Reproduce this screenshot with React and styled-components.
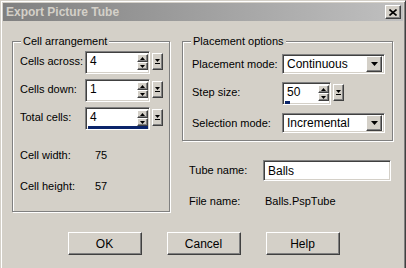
import React from "react";
import styled, { createGlobalStyle, css } from "styled-components";

const GlobalStyle = createGlobalStyle`
  html, body {
    margin: 0;
    padding: 0;
    overflow: hidden;
    background: #d4d0c8;
  }
  body {
    font-family: "Liberation Sans", Arial, sans-serif;
    font-size: 11px;
    color: #000;
  }
`;

const sunken = css`
  box-sizing: border-box;
  border: 1px solid;
  border-color: #808080 #fff #fff #808080;
  box-shadow: inset 1px 1px 0 #404040, inset -1px -1px 0 #d4d0c8;
  background: #fff;
`;

const raised = css`
  box-sizing: border-box;
  border: 1px solid;
  border-color: #fff #404040 #404040 #fff;
  box-shadow: inset -1px -1px 0 #808080, inset 1px 1px 0 #d4d0c8;
  background: #d4d0c8;
`;

const Window = styled.div`
  box-sizing: border-box;
  width: 406px;
  height: 272px;
  background: #d4d0c8;
  border: 1px solid;
  border-color: #d4d0c8 #404040 #404040 #d4d0c8;
  box-shadow: inset 1px 1px 0 #fff, inset -1px -1px 0 #808080;
  padding: 2px;
  display: flex;
  flex-direction: column;
`;

const TitleBar = styled.div`
  height: 18px;
  display: flex;
  align-items: center;
  justify-content: space-between;
  padding: 0 2px 0 3px;
  background: linear-gradient(to right, #808080, #c0c0c0);
`;

const Title = styled.span`
  font-weight: bold;
  font-size: 12px;
  color: #d4d0c8;
`;

const CloseButton = styled.div`
  ${raised};
  width: 16px;
  height: 14px;
  display: flex;
  align-items: center;
  justify-content: center;
`;

const Body = styled.div`
  padding: 20px 10px 0 9px;
  display: flex;
  flex-direction: column;
`;

const Columns = styled.div`
  display: flex;
  gap: 12px;
  align-items: flex-start;
`;

const GroupBox = styled.div`
  position: relative;
  box-sizing: border-box;
  width: ${(p) => p.$w}px;
  height: ${(p) => p.$h}px;
  border: 1px solid #808080;
  box-shadow: inset 1px 1px 0 #fff, 1px 1px 0 #fff;
  padding: ${(p) => p.$pad};
  display: flex;
  flex-direction: column;
  gap: ${(p) => p.$gap}px;
`;

const Legend = styled.span`
  position: absolute;
  top: -7px;
  left: 8px;
  padding: 0 2px;
  background: #d4d0c8;
  line-height: 13px;
`;

const Row = styled.div`
  display: flex;
  align-items: flex-start;
`;

const Label = styled.div`
  width: ${(p) => p.$w}px;
  height: ${(p) => p.$h || 20}px;
  line-height: ${(p) => p.$h || 20}px;
  flex: none;
  white-space: nowrap;
`;

const InfoRows = styled.div`
  margin-top: ${(p) => p.$mt}px;
  display: flex;
  flex-direction: column;
  gap: ${(p) => p.$gap}px;
`;

const InfoRow = styled.div`
  display: flex;
  height: 14px;
  line-height: 14px;
`;

const SpinField = styled.div`
  ${sunken};
  width: ${(p) => p.$w}px;
  height: 23px;
  padding: 2px 1px 1px 2px;
  display: flex;
  flex-direction: column;
`;

const SpinTop = styled.div`
  display: flex;
  height: 16px;
`;

const Value = styled.div`
  flex: 1;
  padding-left: 2px;
  line-height: 14px;
  font-size: 12px;
`;

const SpinButtons = styled.div`
  width: 11px;
  display: flex;
  flex-direction: column;
`;

const SpinBtn = styled.div`
  ${raised};
  height: 8px;
  display: flex;
  align-items: center;
  justify-content: center;
`;

const Track = styled.div`
  height: 3px;
  margin-top: 0;
`;

const Fill = styled.div`
  height: 3px;
  background: #0a246a;
`;

const PopupBtn = styled.div`
  ${raised};
  width: 11px;
  height: 17px;
  margin: 2px 0 0 2px;
  display: flex;
  flex-direction: column;
  align-items: center;
  justify-content: center;
  gap: 1px;
`;

const Combo = styled.div`
  ${sunken};
  width: 103px;
  height: 20px;
  padding: 2px;
  display: flex;
  align-items: center;
`;

const ComboText = styled.div`
  flex: 1;
  padding-left: 2px;
  font-size: 12px;
`;

const DropBtn = styled.div`
  ${raised};
  width: 16px;
  height: 16px;
  display: flex;
  align-items: center;
  justify-content: center;
`;

const RightColumn = styled.div`
  display: flex;
  flex-direction: column;
`;

const NameRows = styled.div`
  margin-top: 19px;
  padding-left: 7px;
  display: flex;
  flex-direction: column;
  gap: 13px;
`;

const TextInput = styled.div`
  ${sunken};
  width: 128px;
  height: 21px;
  padding: 3px 4px;
  font-size: 12px;
  line-height: 14px;
`;

const ButtonRow = styled.div`
  margin-top: 20px;
  display: flex;
  justify-content: center;
  gap: 25px;
  padding-left: 2px;
`;

const Button = styled.div`
  ${raised};
  width: 74px;
  height: 23px;
  display: flex;
  align-items: center;
  justify-content: center;
  font-size: 12px;
`;

const ArrowUp = () => (
  <svg width="5" height="3" viewBox="0 0 5 3">
    <polygon points="2.5,0 5,3 0,3" fill="#000" />
  </svg>
);

const ArrowDown = ({ w = 5, h = 3 }) => (
  <svg width={w} height={h} viewBox={`0 0 ${w} ${h}`}>
    <polygon points={`0,0 ${w},0 ${w / 2},${h}`} fill="#000" />
  </svg>
);

const CloseIcon = () => (
  <svg width="8" height="7" viewBox="0 0 8 7">
    <path d="M0.5 0.5 L7.5 6.5 M7.5 0.5 L0.5 6.5" stroke="#000" strokeWidth="1.6" />
  </svg>
);

function Spin({ value, w = 65, fill = 0 }) {
  return (
    <Row>
      <SpinField $w={w}>
        <SpinTop>
          <Value>{value}</Value>
          <SpinButtons>
            <SpinBtn><ArrowUp /></SpinBtn>
            <SpinBtn><ArrowDown /></SpinBtn>
          </SpinButtons>
        </SpinTop>
        <Track>
          <Fill style={{ width: `${fill}%` }} />
        </Track>
      </SpinField>
      <PopupBtn>
        <ArrowDown />
        <svg width="5" height="1" viewBox="0 0 5 1">
          <rect width="5" height="1" fill="#000" />
        </svg>
      </PopupBtn>
    </Row>
  );
}

function ComboBox({ value }) {
  return (
    <Combo>
      <ComboText>{value}</ComboText>
      <DropBtn><ArrowDown w={7} h={4} /></DropBtn>
    </Combo>
  );
}

export default function App() {
  return (
    <>
      <GlobalStyle />
      <Window>
        <TitleBar>
          <Title>Export Picture Tube</Title>
          <CloseButton><CloseIcon /></CloseButton>
        </TitleBar>
        <Body>
          <Columns>
            <GroupBox $w={158} $h={171} $pad="9px 8px 0 7px" $gap={5}>
              <Legend>Cell arrangement</Legend>
              <Row>
                <Label $w={65}>Cells across:</Label>
                <Spin value="4" />
              </Row>
              <Row>
                <Label $w={65}>Cells down:</Label>
                <Spin value="1" />
              </Row>
              <Row>
                <Label $w={65}>Total cells:</Label>
                <Spin value="4" fill={100} />
              </Row>
              <InfoRows $mt={13} $gap={17}>
                <InfoRow>
                  <Label $w={75} $h={14}>Cell width:</Label>
                  <span>75</span>
                </InfoRow>
                <InfoRow>
                  <Label $w={75} $h={14}>Cell height:</Label>
                  <span>57</span>
                </InfoRow>
              </InfoRows>
            </GroupBox>
            <RightColumn>
              <GroupBox $w={211} $h={100} $pad="12px 7px 0 9px" $gap={8}>
                <Legend>Placement options</Legend>
                <Row>
                  <Label $w={90}>Placement mode:</Label>
                  <ComboBox value="Continuous" />
                </Row>
                <Row>
                  <Label $w={90}>Step size:</Label>
                  <Spin value="50" w={49} fill={12} />
                </Row>
                <Row>
                  <Label $w={90}>Selection mode:</Label>
                  <ComboBox value="Incremental" />
                </Row>
              </GroupBox>
              <NameRows>
                <Row>
                  <Label $w={74} $h={21}>Tube name:</Label>
                  <TextInput>Balls</TextInput>
                </Row>
                <InfoRow>
                  <Label $w={76} $h={14}>File name:</Label>
                  <span>Balls.PspTube</span>
                </InfoRow>
              </NameRows>
            </RightColumn>
          </Columns>
          <ButtonRow>
            <Button>OK</Button>
            <Button>Cancel</Button>
            <Button>Help</Button>
          </ButtonRow>
        </Body>
      </Window>
    </>
  );
}
